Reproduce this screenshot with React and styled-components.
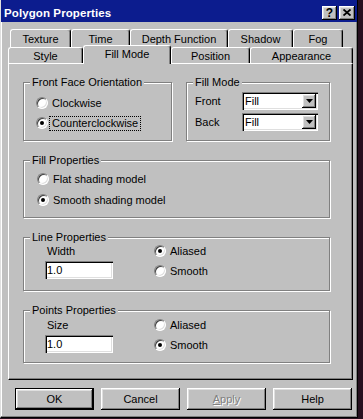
import React from 'react';
import styled, { createGlobalStyle, css } from 'styled-components';

const Global = createGlobalStyle`
  html, body { margin: 0; padding: 0; }
  body {
    background: #26101f;
    width: 363px; height: 419px; overflow: hidden;
    font-family: "Liberation Sans", Arial, sans-serif;
    font-size: 11px;
    color: #000;
  }
`;

const FACE = '#c0c0c0';

const raised = css`
  box-shadow: inset -1px -1px #000, inset 1px 1px #fff, inset -2px -2px #808080, inset 2px 2px #dfdfdf;
`;
const sunken = css`
  box-shadow: inset 1px 1px #808080, inset 2px 2px #000, inset -1px -1px #fff, inset -2px -2px #dfdfdf;
`;

const Dialog = styled.div`
  box-sizing: border-box;
  width: 358px;
  height: 418px;
  background: ${FACE};
  border-left: 1px solid #dfdfdf;
  border-right: 1px solid #000;
  border-bottom: 1px solid #000;
  box-shadow: inset -1px -1px #808080, inset 1px 0 #fff;
  display: flex;
  flex-direction: column;
`;

const TitleBar = styled.div`
  height: 22px;
  flex: none;
  box-sizing: border-box;
  background: #0c1c8e;
  display: flex;
  align-items: center;
  padding: 3px 2px 0 3px;
  gap: 2px;
`;

const TitleText = styled.div`
  flex: 1;
  color: #fff;
  font-weight: bold;
  font-size: 11.5px;
  letter-spacing: 0.1px;
`;

const TitleButton = styled.div`
  box-sizing: border-box;
  width: ${p => p.$w}px;
  height: 14px;
  background: ${FACE};
  ${raised};
  display: flex;
  align-items: center;
  justify-content: center;
  font-weight: bold;
  font-size: 12px;
  line-height: 12px;
`;

const Body = styled.div`
  display: flex;
  flex-direction: column;
  padding: 7px 4px 0 7px;
`;

const TabRow = styled.div`
  display: flex;
  height: ${p => p.$h}px;
  padding-left: ${p => p.$indent}px;
  position: relative;
  z-index: ${p => p.$z};
`;

const Tab = styled.div`
  box-sizing: border-box;
  width: ${p => p.$w}px;
  height: 100%;
  flex: none;
  background: ${FACE};
  border-top: 1px solid #fff;
  border-left: 1px solid #fff;
  border-right: 1px solid #000;
  border-radius: 3px 3px 0 0;
  box-shadow: inset -1px 0 #808080;
  display: flex;
  align-items: center;
  justify-content: center;
  padding-top: 1px;
  ${p => p.$active && css`
    height: 19px;
    margin-top: -2px;
    margin-bottom: -1px;
    padding-bottom: 3px;
  `}
`;

const Panel = styled.div`
  box-sizing: border-box;
  width: 345px;
  height: 317px;
  border-top: 1px solid #fff;
  border-left: 1px solid #fff;
  border-right: 1px solid #000;
  border-bottom: 1px solid #000;
  box-shadow: inset -1px -1px #808080;
  padding: 18px 0 0 14px;
  display: flex;
  flex-direction: column;
  gap: 19px;
`;

const Row = styled.div`
  display: flex;
  gap: ${p => p.$gap || 0}px;
`;

const GroupBox = styled.div`
  position: relative;
  box-sizing: border-box;
  width: ${p => p.$w}px;
  height: ${p => p.$h}px;
  border: 1px solid #808080;
  box-shadow: inset 1px 1px #fff, 1px 1px #fff;
  padding: ${p => p.$pad};
`;

const Caption = styled.span`
  position: absolute;
  top: -7px;
  left: 6px;
  padding: 0 2px;
  line-height: 13px;
  background: ${FACE};
`;

const RadioList = styled.div`
  display: flex;
  flex-direction: column;
  gap: ${p => p.$gap}px;
`;

const RadioRow = styled.div`
  display: flex;
  align-items: center;
  height: 20px;
  gap: 1px;
`;

const RadioCircle = styled.span`
  box-sizing: border-box;
  width: 12px;
  height: 12px;
  flex: none;
  border-radius: 50%;
  background: #fff;
  border: 1px solid;
  border-color: #808080 #fff #fff #808080;
  box-shadow: inset 1px 1px #404040, inset -1px -1px #dfdfdf;
  display: flex;
  align-items: center;
  justify-content: center;
  &::after {
    content: '';
    width: 4px;
    height: 4px;
    border-radius: 50%;
    background: #000;
    display: ${p => (p.$checked ? 'block' : 'none')};
  }
`;

const OptionText = styled.span`
  padding: 0 2px;
  line-height: 13px;
  border: 1px dotted ${p => (p.$focus ? '#000' : 'transparent')};
`;

const FieldGrid = styled.div`
  display: grid;
  grid-template-columns: 47px 76px;
  row-gap: 3px;
  align-items: center;
`;

const Select = styled.div`
  box-sizing: border-box;
  height: 18px;
  background: #fff;
  ${sunken};
  display: flex;
  align-items: center;
  justify-content: space-between;
  padding: 2px 2px 2px 3px;
`;

const DropButton = styled.div`
  box-sizing: border-box;
  width: 14px;
  height: 14px;
  background: ${FACE};
  ${raised};
  display: flex;
  align-items: center;
  justify-content: center;
`;

const Columns = styled.div`
  display: flex;
`;

const LeftCol = styled.div`
  width: 109px;
  display: flex;
  flex-direction: column;
`;

const FieldLabel = styled.div`
  height: 20px;
  display: flex;
  align-items: center;
  padding-left: 2px;
`;

const TextInput = styled.div`
  box-sizing: border-box;
  width: 68px;
  height: 18px;
  background: #fff;
  ${sunken};
  display: flex;
  align-items: center;
  padding-left: 2px;
`;

const ButtonRow = styled.div`
  display: flex;
  gap: 7px;
  padding: 8px 0 0 7px;
`;

const Button = styled.div`
  box-sizing: border-box;
  width: 79px;
  height: 22px;
  background: ${FACE};
  display: flex;
  align-items: center;
  justify-content: center;
  ${raised};
  ${p => p.$default && css`
    border: 1px solid #000;
  `}
  ${p => p.$disabled && css`
    color: #808080;
    text-shadow: 1px 1px #fff;
  `}
`;

const Accel = styled.span`
  text-decoration: underline;
`;

const Arrow = () => (
  <svg width="7" height="4" viewBox="0 0 7 4">
    <path d="M0 0h7L3.5 4z" fill="#000" />
  </svg>
);

const CloseGlyph = () => (
  <svg width="8" height="7" viewBox="0 0 8 7">
    <path d="M0.5 0.5L7.5 6.5M7.5 0.5L0.5 6.5" stroke="#000" strokeWidth="1.8" />
  </svg>
);

const Radio = ({ checked, focus, children }) => (
  <RadioRow>
    <RadioCircle $checked={checked} />
    <OptionText $focus={focus}>{children}</OptionText>
  </RadioRow>
);

const row1 = [
  ['Texture', 61],
  ['Time', 59],
  ['Depth Function', 98],
  ['Shadow', 65],
  ['Fog', 50],
];
const row2 = [
  ['Style', 75],
  ['Fill Mode', 88, true],
  ['Position', 79],
  ['Appearance', 103],
];

const SizeGroup = ({ title, label, pt, aliased }) => (
  <GroupBox $w={307} $h={pt === 3 ? 54 : 53} $pad={`${pt}px 0 0 21px`}>
    <Caption>{title}</Caption>
    <Columns>
      <LeftCol>
        <FieldLabel>{label}</FieldLabel>
        <TextInput>1.0</TextInput>
      </LeftCol>
      <RadioList $gap={0}>
        <Radio checked={aliased}>Aliased</Radio>
        <Radio checked={!aliased}>Smooth</Radio>
      </RadioList>
    </Columns>
  </GroupBox>
);

export default function App() {
  return (
    <>
      <Global />
      <Dialog>
        <TitleBar>
          <TitleText>Polygon Properties</TitleText>
          <TitleButton $w={15}>?</TitleButton>
          <TitleButton $w={16}><CloseGlyph /></TitleButton>
        </TitleBar>
        <Body>
          <TabRow $h={18} $indent={2} $z={0}>
            {row1.map(([t, w]) => (
              <Tab key={t} $w={w}>{t}</Tab>
            ))}
          </TabRow>
          <TabRow $h={16} $indent={0} $z={1}>
            {row2.map(([t, w, a]) => (
              <Tab key={t} $w={w} $active={a}>{t}</Tab>
            ))}
          </TabRow>
          <Panel>
            <Row $gap={14}>
              <GroupBox $w={149} $h={59} $pad="10px 0 0 12px">
                <Caption>Front Face Orientation</Caption>
                <RadioList $gap={0}>
                  <Radio>Clockwise</Radio>
                  <Radio checked focus>Counterclockwise</Radio>
                </RadioList>
              </GroupBox>
              <GroupBox $w={144} $h={59} $pad="9px 0 0 8px">
                <Caption>Fill Mode</Caption>
                <FieldGrid>
                  <span>Front</span>
                  <Select>
                    <span>Fill</span>
                    <DropButton><Arrow /></DropButton>
                  </Select>
                  <span>Back</span>
                  <Select>
                    <span>Fill</span>
                    <DropButton><Arrow /></DropButton>
                  </Select>
                </FieldGrid>
              </GroupBox>
            </Row>
            <GroupBox $w={307} $h={58} $pad="8px 0 0 13px">
              <Caption>Fill Properties</Caption>
              <RadioList $gap={1}>
                <Radio>Flat shading model</Radio>
                <Radio checked>Smooth shading model</Radio>
              </RadioList>
            </GroupBox>
            <SizeGroup title="Line Properties" label="Width" pt={3} aliased />
            <SizeGroup title="Points Properties" label="Size" pt={4} aliased={false} />
          </Panel>
          <ButtonRow>
            <Button $default>OK</Button>
            <Button>Cancel</Button>
            <Button $disabled><span><Accel>A</Accel>pply</span></Button>
            <Button>Help</Button>
          </ButtonRow>
        </Body>
      </Dialog>
    </>
  );
}
